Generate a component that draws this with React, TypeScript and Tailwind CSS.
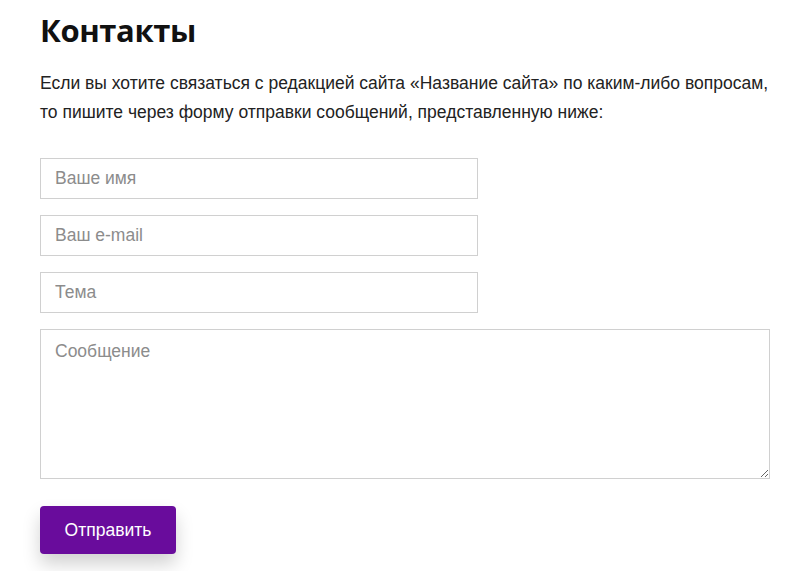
import * as React from 'react';

const fieldClass =
	'h-[41px] w-[438px] border border-[#d0d0d0] bg-white px-[14px] text-[17.5px] text-[#333] placeholder:text-[#8c8c8c] outline-none';

export default function App() {
	return (
		<div className="min-h-[571px] bg-white px-10 pt-[8px] font-['Liberation_Sans',Arial,sans-serif] text-[#222]">
			<h1 className="font-['Open_Sans',sans-serif] text-[31px] font-bold leading-[44px] tracking-[-0.4px] text-[#111]">
				Контакты
			</h1>
			<p className="mt-[17px] w-[740px] text-[17.5px] leading-[29px]">
				Если вы хотите связаться с редакцией сайта «Название сайта» по каким-либо вопросам,
				<br />
				то пишите через форму отправки сообщений, представленную ниже:
			</p>
			<form className="mt-[31px] flex flex-col gap-4" onSubmit={(e) => e.preventDefault()}>
				<input className={fieldClass} placeholder="Ваше имя" />
				<input className={fieldClass} placeholder="Ваш e-mail" />
				<input className={fieldClass} placeholder="Тема" />
				<textarea
					className="h-[150px] w-[730px] border border-[#d0d0d0] bg-white px-[14px] py-[10px] text-[17.5px] leading-[22px] text-[#333] placeholder:text-[#8c8c8c] outline-none"
					placeholder="Сообщение"
				/>
				<div className="mt-[11px]">
					<button
						type="submit"
						className="h-[48px] w-[136px] rounded-[4px] bg-[#690c9c] text-[17.5px] text-white shadow-[0_10px_18px_rgba(0,0,0,0.18)]"
					>
						Отправить
					</button>
				</div>
			</form>
		</div>
	);
}
